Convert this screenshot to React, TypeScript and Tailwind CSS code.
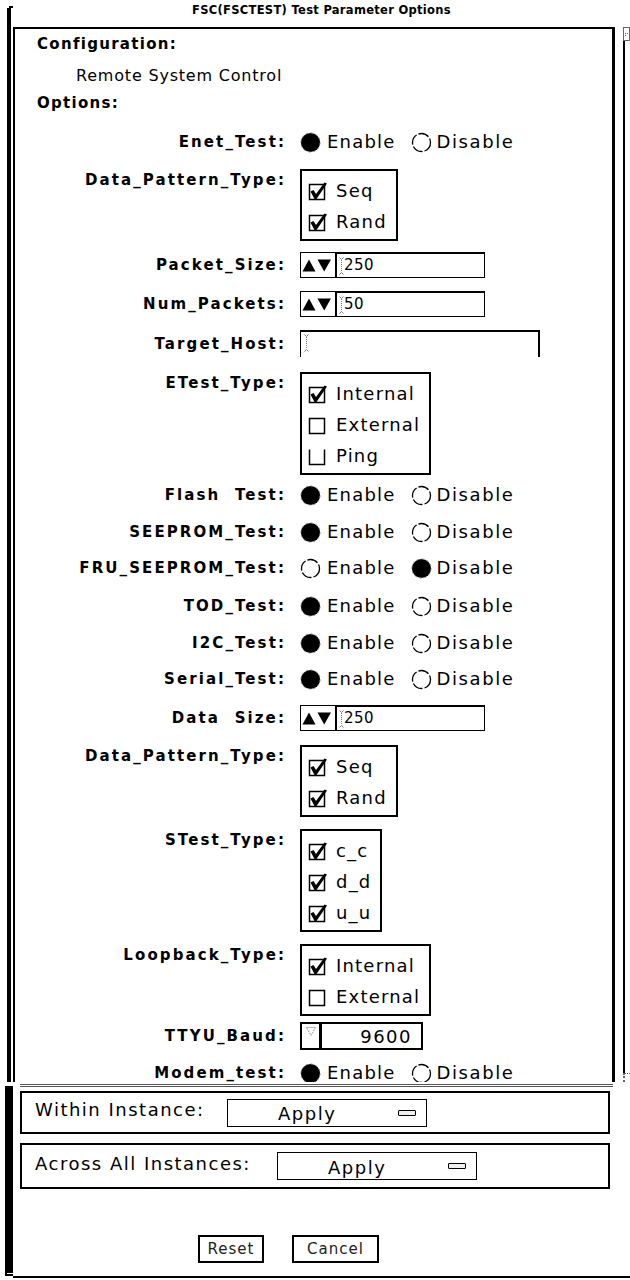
import React from "react";
import clsx from "clsx";

const Radio = ({ on }: { on: boolean }) => (
  <svg width="21" height="21" viewBox="0 0 21 21" className="shrink-0">
    {on ? (
      <>
        <circle cx="10.5" cy="10.5" r="9.6" fill="#000" />
        <circle cx="10.5" cy="10.5" r="9.6" fill="none" stroke="#888" strokeWidth="1" strokeDasharray="2 3" />
      </>
    ) : (
      <circle cx="10.5" cy="10.5" r="9" fill="none" stroke="#000" strokeWidth="1.3" strokeDasharray="11 2" />
    )}
  </svg>
);

const Check = ({ on, open }: { on: boolean; open?: boolean }) => (
  <svg width="20" height="20" viewBox="0 0 20 20" className="shrink-0">
    {open ? (
      <path d="M1.5 3.5 V18.5 H16.5 V3.5" fill="none" stroke="#000" strokeWidth="1.5" />
    ) : (
      <rect x="1.5" y="3.5" width="15" height="15" fill="none" stroke="#000" strokeWidth="1.5" />
    )}
    {on && <path d="M2.5 10.5 L5.5 9 L8 13 L16.5 1.5 L19 2.5 L8.5 18 L6.5 18 Z" fill="#000" />}
  </svg>
);

const Caret = () => (
  <svg width="5" height="18" viewBox="0 0 5 18" className="shrink-0">
    <path d="M0.5 0.5 L2.5 2.5 L4.5 0.5 M0.5 17.5 L2.5 15.5 L4.5 17.5" stroke="#777" strokeWidth="1" fill="none" />
    <line x1="2.5" y1="3" x2="2.5" y2="15" stroke="#777" strokeWidth="1" strokeDasharray="1 1" />
  </svg>
);

const Arrows = () => (
  <svg width="30" height="13" viewBox="0 0 30 13" className="shrink-0">
    <polygon points="0.5,12.5 7,0.5 13.5,12.5" fill="#000" />
    <polygon points="15.5,0.5 29,0.5 22.2,12.5" fill="#000" />
  </svg>
);

const Label = ({ children, top }: { children: React.ReactNode; top?: boolean }) => (
  <div
    className={clsx(
      "w-[271px] shrink-0 text-right text-[15px] font-bold tracking-[2.1px] leading-[20px] whitespace-pre",
      top && "mt-px"
    )}
  >
    {children}
  </div>
);

const Row = ({
  label,
  className,
  top,
  children,
}: {
  label: string;
  className?: string;
  top?: boolean;
  children: React.ReactNode;
}) => (
  <div className={clsx("flex", top ? "items-start" : "items-center", className)}>
    <Label top={top}>{label}</Label>
    <div className="ml-[14px] flex">{children}</div>
  </div>
);

const EnDis = ({ enable }: { enable: boolean }) => (
  <div className="flex items-center text-[18px] tracking-[1.2px] leading-[24px]">
    <Radio on={enable} />
    <span className="ml-[6px]">Enable</span>
    <span className="ml-[15px] flex">
      <Radio on={!enable} />
    </span>
    <span className="ml-[5px] tracking-[1.6px]">Disable</span>
  </div>
);

const Group = ({ items }: { items: [string, boolean, boolean?][] }) => (
  <div className="flex flex-col border-2 border-black pt-[4px] pb-[2px] pl-[6px] pr-[9px]">
    {items.map(([t, c, o]) => (
      <div key={t} className="h-[31px] flex items-center">
        <Check on={c} open={o} />
        <span className="ml-[8px] text-[18px] tracking-[1.2px] leading-[24px]">{t}</span>
      </div>
    ))}
  </div>
);

const Spin = ({ value }: { value: string }) => (
  <div className="flex w-[185px] h-[26px] border border-black">
    <div className="w-[34px] flex items-center pl-[1px]">
      <Arrows />
    </div>
    <div className="flex-1 flex items-center border-l-2 border-t border-black pl-[2px] text-[15px] tracking-[0.5px]">
      <Caret />
      <span>{value}</span>
    </div>
  </div>
);

const OptionButton = () => (
  <div className="w-[200px] h-[28px] border border-black flex items-center">
    <span className="ml-[50px] mt-[3px] text-[18px] tracking-[1.5px] leading-[24px]">Apply</span>
    <span className="ml-auto mr-[10px] w-[18px] h-[6px] border border-black rounded-[1px] bg-[#eee]" />
  </div>
);

export default function App() {
  return (
    <div className="w-[630px] h-[1280px] bg-white text-black flex overflow-hidden font-['DejaVu_Sans',sans-serif]">
      {/* window edge on the left */}
      <div className="w-[13px] shrink-0 flex flex-col">
        <div className="h-[8px] flex justify-end">
          <div className="mt-[6px] w-[4px] h-[2px] bg-black" />
        </div>
        <div className="ml-[7px] w-[4px] h-[1074px] bg-black" />
        <div className="ml-[5px] w-[8px] h-[187px] mt-[4px] bg-black" />
        <div className="ml-[5px] w-[8px] h-[3px] border-l-2 border-b-2 border-black" />
      </div>

      <div className="flex-1 flex flex-col">
        {/* title */}
        <div className="h-[27px] pt-[3px] flex justify-center">
          <span className="text-[11.5px] leading-[14px] font-bold tracking-[0.3px] whitespace-nowrap">
            FSC(FSCTEST) Test Parameter Options
          </span>
        </div>

        {/* scrolled options panel */}
        <div className="h-[1055px] flex">
          <div className="w-[602px] border-l-2 border-t-2 border-r-[3px] border-black overflow-hidden flex flex-col">
            <div className="pl-[22px] mt-[5px] text-[15px] font-bold tracking-[1.3px] leading-[20px]">Configuration:</div>
            <div className="pl-[61px] mt-[12px] text-[16px] tracking-[0.8px] leading-[20px]">Remote System Control</div>
            <div className="pl-[22px] mt-[7px] text-[15px] font-bold tracking-[1.3px] leading-[20px]">Options:</div>

            <Row label="Enet_Test:" className="mt-[17px] h-[24px]">
              <EnDis enable />
            </Row>
            <Row label="Data_Pattern_Type:" top className="mt-[15px]">
              <Group items={[["Seq", true], ["Rand", true]]} />
            </Row>
            <Row label="Packet_Size:" className="mt-[11px]">
              <Spin value="250" />
            </Row>
            <Row label="Num_Packets:" className="mt-[13px]">
              <Spin value="50" />
            </Row>
            <Row label="Target_Host:" className="mt-[13px]">
              <div className="w-[240px] h-[27px] border-t-2 border-l border-r-2 border-black flex items-start pt-[2px] pl-[3px]">
                <Caret />
              </div>
            </Row>
            <Row label="ETest_Type:" top className="mt-[15px]">
              <Group items={[["Internal", true], ["External", false], ["Ping", false, true]]} />
            </Row>
            <Row label={"Flash  Test:"} className="mt-[8px] h-[24px]">
              <EnDis enable />
            </Row>
            <Row label="SEEPROM_Test:" className="mt-[13px] h-[24px]">
              <EnDis enable />
            </Row>
            <Row label="FRU_SEEPROM_Test:" className="mt-[12px] h-[24px]">
              <EnDis enable={false} />
            </Row>
            <Row label="TOD_Test:" className="mt-[14px] h-[24px]">
              <EnDis enable />
            </Row>
            <Row label="I2C_Test:" className="mt-[13px] h-[24px]">
              <EnDis enable />
            </Row>
            <Row label="Serial_Test:" className="mt-[12px] h-[24px]">
              <EnDis enable />
            </Row>
            <Row label={"Data  Size:"} className="mt-[14px]">
              <Spin value="250" />
            </Row>
            <Row label="Data_Pattern_Type:" top className="mt-[14px]">
              <Group items={[["Seq", true], ["Rand", true]]} />
            </Row>
            <Row label="STest_Type:" top className="mt-[12px]">
              <Group items={[["c_c", true], ["d_d", true], ["u_u", true]]} />
            </Row>
            <Row label="Loopback_Type:" top className="mt-[12px]">
              <Group items={[["Internal", true], ["External", false]]} />
            </Row>
            <Row label="TTYU_Baud:" className="mt-[6px]">
              <div className="w-[123px] h-[28px] border-2 border-black flex">
                <div className="w-[20px] border-r-[3px] border-black flex items-start justify-center pt-[3px]">
                  <svg width="10" height="9" viewBox="0 0 10 9">
                    <path d="M0.5 0.5 H9.5 L5 8.5 Z" fill="none" stroke="#777" strokeWidth="1" strokeDasharray="1 1" />
                  </svg>
                </div>
                <div className="flex-1 flex items-center justify-end pr-[9px] text-[18px] tracking-[1.5px]">9600</div>
              </div>
            </Row>
            <Row label="Modem_test:" className="mt-[11px] h-[24px]">
              <EnDis enable />
            </Row>
          </div>

          {/* scrollbar edge */}
          <div className="ml-[8px] w-[7px] flex flex-col">
            <div className="h-[14px] border border-[#666] flex items-center justify-center">
              <div className="w-[3px] h-[3px] border-t border-l border-dotted border-[#666]" />
            </div>
            <div className="flex-1 w-[2px] bg-black" />
            <div className="h-[9px] border-l-2 border-t border-dotted border-[#666]" />
          </div>
        </div>

        {/* apply section */}
        <div className="flex-1 flex flex-col pt-[2px] border-b-2 border-black mb-[2px]">
          <div className="ml-[7px] w-[593px] h-[3px] border-t border-b border-[#555]" />
          <div className="ml-[7px] mt-[4px] w-[590px] h-[43px] border-2 border-black flex items-center">
            <div className="w-[205px] pl-[13px] -mt-[5px] text-[18px] tracking-[1.5px] leading-[24px]">Within Instance:</div>
            <OptionButton />
          </div>
          <div className="ml-[7px] mt-[9px] w-[590px] h-[46px] border-2 border-black flex items-center">
            <div className="w-[255px] pl-[13px] -mt-[5px] text-[18px] tracking-[1.5px] leading-[24px]">Across All Instances:</div>
            <OptionButton />
          </div>
          <div className="mt-[46px] flex pl-[185px] gap-[28px]">
            <div className="w-[66px] h-[28px] border-2 border-black flex items-center justify-center text-[15px] tracking-[1px] text-[#222]">
              Reset
            </div>
            <div className="w-[87px] h-[28px] border-2 border-black flex items-center justify-center text-[15px] tracking-[1px] text-[#222]">
              Cancel
            </div>
          </div>
        </div>
      </div>
    </div>
  );
}
